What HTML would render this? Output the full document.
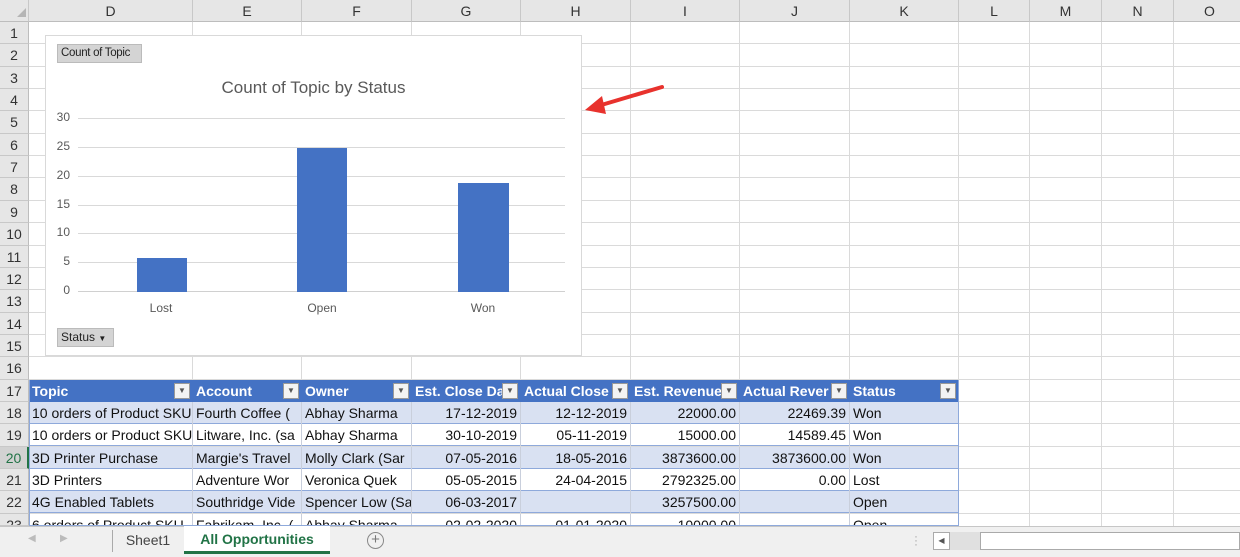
<!DOCTYPE html>
<html><head><meta charset="utf-8"><style>
*{margin:0;padding:0;box-sizing:border-box}
body{width:1240px;height:557px;overflow:hidden;background:#fff;font-family:"Liberation Sans",Arial,sans-serif;position:relative}
.a{position:absolute}
.ch{position:absolute;top:0;height:22px;background:#e6e6e6;border-right:1px solid #c8c8c8;border-bottom:1px solid #bdbdbd;font-size:14px;color:#333;text-align:center;line-height:22px}
.rh{position:absolute;left:0;width:29px;background:#e6e6e6;border-right:1px solid #bdbdbd;border-bottom:1px solid #c8c8c8;font-size:14px;color:#333;text-align:center}
.hl{position:absolute;left:29px;right:0;height:1px;background:#dadada}
.vl{position:absolute;top:22px;height:504px;width:1px;background:#dadada}
.row{position:absolute;left:29px;width:930px;height:22px;font-size:14px;color:#111;line-height:22px}
.c{position:absolute;top:0;height:22px;overflow:hidden;white-space:nowrap;padding:0 3px;border-right:1px solid #c9cfdc}
.r{text-align:right}
.hd{background:#4472c4;color:#fff;font-weight:bold}
.hd .c{border-right:none}
.dd{position:absolute;top:3px;width:16px;height:16px;background:#f3f3f3;border:1px solid #999;font-size:8px;color:#555;line-height:14px;text-align:center}
.b{background:#d9e1f2;border-bottom:1px solid #8ea9db}
.w{background:#fff;border-bottom:1px solid #8ea9db}
.y{position:absolute;left:50px;width:20px;text-align:right;font-size:12px;color:#595959}
</style></head><body>
<div class="ch" style="left:0;width:29px"></div>
<div class="a" style="left:17px;top:8px;width:0;height:0;border-left:9px solid transparent;border-bottom:9px solid #b5b5b5"></div>
<div class="ch" style="left:29px;width:164px">D</div>
<div class="ch" style="left:193px;width:109px">E</div>
<div class="ch" style="left:302px;width:110px">F</div>
<div class="ch" style="left:412px;width:109px">G</div>
<div class="ch" style="left:521px;width:110px">H</div>
<div class="ch" style="left:631px;width:109px">I</div>
<div class="ch" style="left:740px;width:110px">J</div>
<div class="ch" style="left:850px;width:109px">K</div>
<div class="ch" style="left:959px;width:71px">L</div>
<div class="ch" style="left:1030px;width:72px">M</div>
<div class="ch" style="left:1102px;width:72px">N</div>
<div class="ch" style="left:1174px;width:72px">O</div>
<div class="rh" style="top:22px;height:22px;line-height:22px">1</div>
<div class="rh" style="top:44px;height:23px;line-height:23px">2</div>
<div class="rh" style="top:67px;height:22px;line-height:22px">3</div>
<div class="rh" style="top:89px;height:22px;line-height:22px">4</div>
<div class="rh" style="top:111px;height:23px;line-height:23px">5</div>
<div class="rh" style="top:134px;height:22px;line-height:22px">6</div>
<div class="rh" style="top:156px;height:22px;line-height:22px">7</div>
<div class="rh" style="top:178px;height:23px;line-height:23px">8</div>
<div class="rh" style="top:201px;height:22px;line-height:22px">9</div>
<div class="rh" style="top:223px;height:23px;line-height:23px">10</div>
<div class="rh" style="top:246px;height:22px;line-height:22px">11</div>
<div class="rh" style="top:268px;height:22px;line-height:22px">12</div>
<div class="rh" style="top:290px;height:23px;line-height:23px">13</div>
<div class="rh" style="top:313px;height:22px;line-height:22px">14</div>
<div class="rh" style="top:335px;height:22px;line-height:22px">15</div>
<div class="rh" style="top:357px;height:23px;line-height:23px">16</div>
<div class="rh" style="top:380px;height:22px;line-height:22px">17</div>
<div class="rh" style="top:402px;height:22px;line-height:22px">18</div>
<div class="rh" style="top:424px;height:23px;line-height:23px">19</div>
<div class="rh" style="top:447px;height:22px;line-height:22px;color:#217346;background:#d2d2d2;border-right:2px solid #217346">20</div>
<div class="rh" style="top:469px;height:22px;line-height:22px">21</div>
<div class="rh" style="top:491px;height:23px;line-height:23px">22</div>
<div class="rh" style="top:514px;height:12px;line-height:22px;overflow:hidden">23</div>
<div class="hl" style="top:43px"></div><div class="hl" style="top:66px"></div><div class="hl" style="top:88px"></div><div class="hl" style="top:110px"></div><div class="hl" style="top:133px"></div><div class="hl" style="top:155px"></div><div class="hl" style="top:177px"></div><div class="hl" style="top:200px"></div><div class="hl" style="top:222px"></div><div class="hl" style="top:245px"></div><div class="hl" style="top:267px"></div><div class="hl" style="top:289px"></div><div class="hl" style="top:312px"></div><div class="hl" style="top:334px"></div><div class="hl" style="top:356px"></div><div class="hl" style="top:379px"></div><div class="hl" style="top:401px"></div><div class="hl" style="top:423px"></div><div class="hl" style="top:446px"></div><div class="hl" style="top:468px"></div><div class="hl" style="top:490px"></div><div class="hl" style="top:513px"></div>
<div class="vl" style="left:192px"></div><div class="vl" style="left:301px"></div><div class="vl" style="left:411px"></div><div class="vl" style="left:520px"></div><div class="vl" style="left:630px"></div><div class="vl" style="left:739px"></div><div class="vl" style="left:849px"></div><div class="vl" style="left:958px"></div><div class="vl" style="left:1029px"></div><div class="vl" style="left:1101px"></div><div class="vl" style="left:1173px"></div>
<div class="a" style="left:45px;top:35px;width:537px;height:321px;background:#fff;border:1px solid #d9d9d9"></div>
<div class="a" style="left:57px;top:44px;width:85px;height:19px;background:#d4d4d4;border:1px solid #bbb;font-size:11.5px;line-height:17px;padding-left:3px;color:#222;letter-spacing:-0.3px">Count of Topic</div>
<div class="a" style="left:45px;top:78px;width:537px;text-align:center;font-size:17px;color:#595959">Count of Topic by Status</div>
<div class="a" style="left:78px;top:118px;width:487px;height:1px;background:#d9d9d9"></div>
<div class="a" style="left:78px;top:147px;width:487px;height:1px;background:#d9d9d9"></div>
<div class="a" style="left:78px;top:176px;width:487px;height:1px;background:#d9d9d9"></div>
<div class="a" style="left:78px;top:205px;width:487px;height:1px;background:#d9d9d9"></div>
<div class="a" style="left:78px;top:233px;width:487px;height:1px;background:#d9d9d9"></div>
<div class="a" style="left:78px;top:262px;width:487px;height:1px;background:#d9d9d9"></div>
<div class="a" style="left:78px;top:291px;width:487px;height:1px;background:#d0d0d0"></div>
<div class="y" style="top:110px">30</div>
<div class="y" style="top:139px">25</div>
<div class="y" style="top:168px">20</div>
<div class="y" style="top:197px">15</div>
<div class="y" style="top:225px">10</div>
<div class="y" style="top:254px">5</div>
<div class="y" style="top:283px">0</div>
<div class="a" style="left:137px;top:258px;width:50px;height:34px;background:#4472c4"></div>
<div class="a" style="left:297px;top:148px;width:50px;height:144px;background:#4472c4"></div>
<div class="a" style="left:458px;top:183px;width:51px;height:109px;background:#4472c4"></div>
<div class="a" style="left:121px;top:301px;width:80px;text-align:center;font-size:12px;color:#595959">Lost</div>
<div class="a" style="left:282px;top:301px;width:80px;text-align:center;font-size:12px;color:#595959">Open</div>
<div class="a" style="left:443px;top:301px;width:80px;text-align:center;font-size:12px;color:#595959">Won</div>
<div class="a" style="left:57px;top:328px;width:57px;height:19px;background:#d4d4d4;border:1px solid #bbb;font-size:12px;line-height:17px;padding-left:3px;color:#222">Status <span style="font-size:8px">&#9660;</span></div>
<svg class="a" style="left:580px;top:80px" width="90" height="40"><line x1="82" y1="7" x2="18" y2="26" stroke="#e8322d" stroke-width="4" stroke-linecap="round"/><polygon points="5,30 22,16 26,34" fill="#e8322d"/></svg>
<div class="row hd" style="top:380px">
<div class="c" style="left:0;width:164px">Topic</div><div class="dd" style="left:145px">&#9660;</div>
<div class="c" style="left:164px;width:109px">Account</div><div class="dd" style="left:254px">&#9660;</div>
<div class="c" style="left:273px;width:110px">Owner</div><div class="dd" style="left:364px">&#9660;</div>
<div class="c" style="left:383px;width:91px">Est. Close Da</div><div class="dd" style="left:473px">&#9660;</div>
<div class="c" style="left:492px;width:91px">Actual Close</div><div class="dd" style="left:583px">&#9660;</div>
<div class="c" style="left:602px;width:90px">Est. Revenue</div><div class="dd" style="left:692px">&#9660;</div>
<div class="c" style="left:711px;width:91px">Actual Rever</div><div class="dd" style="left:802px">&#9660;</div>
<div class="c" style="left:821px;width:90px">Status</div><div class="dd" style="left:911px">&#9660;</div>
</div>
<div class="row b" style="top:402px"><div class="c" style="left:0;width:164px">10 orders of Product SKU</div><div class="c" style="left:164px;width:109px">Fourth Coffee (</div><div class="c" style="left:273px;width:110px">Abhay Sharma</div><div class="c r" style="left:383px;width:109px">17-12-2019</div><div class="c r" style="left:492px;width:110px">12-12-2019</div><div class="c r" style="left:602px;width:109px">22000.00</div><div class="c r" style="left:711px;width:110px">22469.39</div><div class="c" style="left:821px;width:109px">Won</div></div>
<div class="row w" style="top:424px"><div class="c" style="left:0;width:164px">10 orders or Product SKU</div><div class="c" style="left:164px;width:109px">Litware, Inc. (sa</div><div class="c" style="left:273px;width:110px">Abhay Sharma</div><div class="c r" style="left:383px;width:109px">30-10-2019</div><div class="c r" style="left:492px;width:110px">05-11-2019</div><div class="c r" style="left:602px;width:109px">15000.00</div><div class="c r" style="left:711px;width:110px">14589.45</div><div class="c" style="left:821px;width:109px">Won</div></div>
<div class="row b" style="top:447px"><div class="c" style="left:0;width:164px">3D Printer Purchase</div><div class="c" style="left:164px;width:109px">Margie's Travel</div><div class="c" style="left:273px;width:110px">Molly Clark (Sar</div><div class="c r" style="left:383px;width:109px">07-05-2016</div><div class="c r" style="left:492px;width:110px">18-05-2016</div><div class="c r" style="left:602px;width:109px">3873600.00</div><div class="c r" style="left:711px;width:110px">3873600.00</div><div class="c" style="left:821px;width:109px">Won</div></div>
<div class="row w" style="top:469px"><div class="c" style="left:0;width:164px">3D Printers</div><div class="c" style="left:164px;width:109px">Adventure Wor</div><div class="c" style="left:273px;width:110px">Veronica Quek</div><div class="c r" style="left:383px;width:109px">05-05-2015</div><div class="c r" style="left:492px;width:110px">24-04-2015</div><div class="c r" style="left:602px;width:109px">2792325.00</div><div class="c r" style="left:711px;width:110px">0.00</div><div class="c" style="left:821px;width:109px">Lost</div></div>
<div class="row b" style="top:491px"><div class="c" style="left:0;width:164px">4G Enabled Tablets</div><div class="c" style="left:164px;width:109px">Southridge Vide</div><div class="c" style="left:273px;width:110px">Spencer Low (Sa</div><div class="c r" style="left:383px;width:109px">06-03-2017</div><div class="c r" style="left:492px;width:110px"></div><div class="c r" style="left:602px;width:109px">3257500.00</div><div class="c r" style="left:711px;width:110px"></div><div class="c" style="left:821px;width:109px">Open</div></div>
<div class="row w" style="top:514px;height:12px;overflow:hidden"><div class="c" style="left:0;width:164px">6 orders of Product SKU</div><div class="c" style="left:164px;width:109px">Fabrikam, Inc. (</div><div class="c" style="left:273px;width:110px">Abhay Sharma</div><div class="c r" style="left:383px;width:109px">02-02-2020</div><div class="c r" style="left:492px;width:110px">01-01-2020</div><div class="c r" style="left:602px;width:109px">10000.00</div><div class="c r" style="left:711px;width:110px"></div><div class="c" style="left:821px;width:109px">Open</div></div>
<div class="a" style="left:958px;top:380px;width:1px;height:146px;background:#8ea9db"></div>
<div class="a" style="left:29px;top:380px;width:1px;height:146px;background:#8ea9db"></div>
<div class="a" style="left:0;top:526px;width:1240px;height:31px;background:#f0f0f0;border-top:1px solid #c6c6c6"></div>
<div class="a" style="left:28px;top:533px;font-size:10px;color:#bbb">&#9664;</div>
<div class="a" style="left:60px;top:533px;font-size:10px;color:#bbb">&#9654;</div>
<div class="a" style="left:112px;top:530px;width:1px;height:22px;background:#aaa"></div>
<div class="a" style="left:113px;top:526px;width:70px;height:28px;font-size:14px;color:#444;text-align:center;line-height:28px">Sheet1</div>
<div class="a" style="left:184px;top:526px;width:146px;height:28px;background:#fff;border-bottom:3px solid #217346;font-size:14px;font-weight:bold;color:#217346;text-align:center;line-height:27px">All Opportunities</div>
<div class="a" style="left:367px;top:532px;width:17px;height:17px;border:1px solid #888;border-radius:50%;font-size:15px;color:#777;text-align:center;line-height:14px">+</div>
<div class="a" style="left:914px;top:534px;font-size:12px;color:#aaa;line-height:4px">·<br>·<br>·</div>
<div class="a" style="left:933px;top:532px;width:17px;height:18px;background:#fff;border:1px solid #aaa;font-size:8px;color:#555;text-align:center;line-height:16px">&#9664;</div>
<div class="a" style="left:950px;top:532px;width:30px;height:18px;background:#e0e0e0"></div>
<div class="a" style="left:980px;top:532px;width:260px;height:18px;background:#fff;border:1px solid #aaa"></div>
</body></html>
